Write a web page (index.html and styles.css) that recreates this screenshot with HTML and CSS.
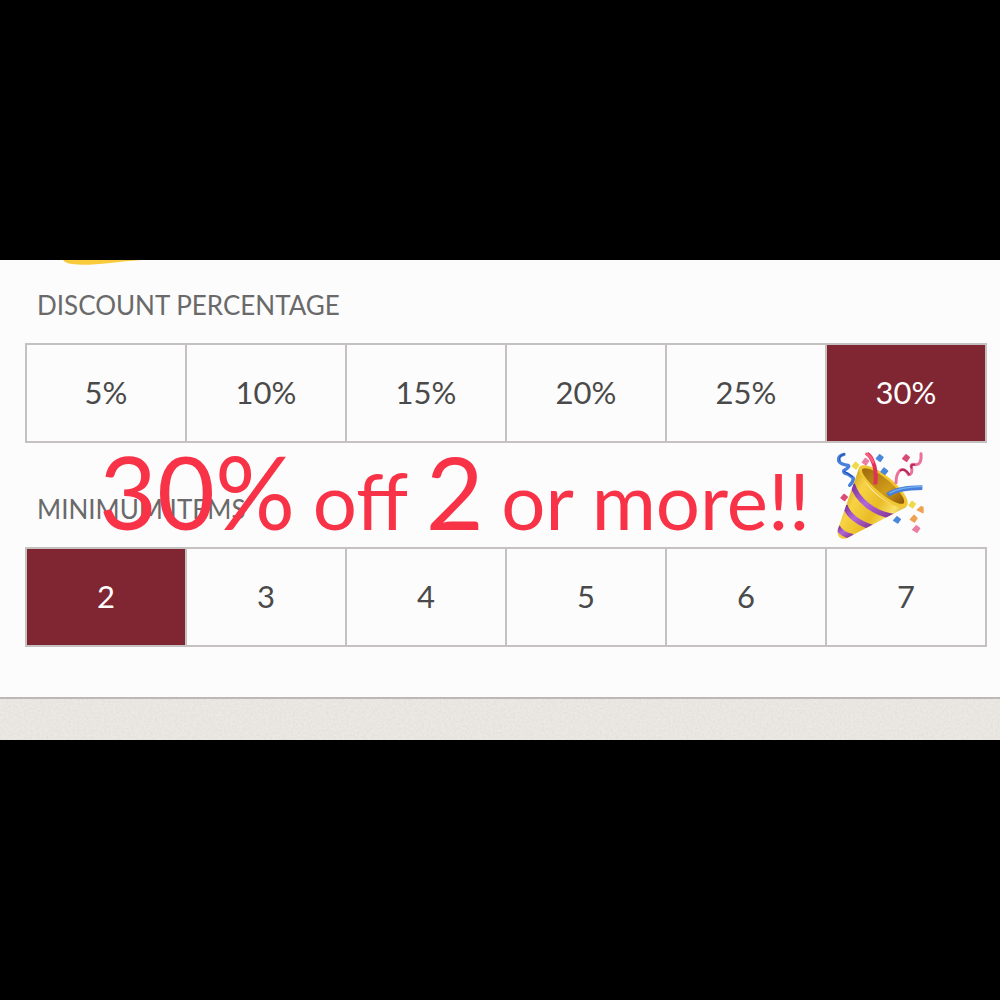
FILE: index.html
```html
<!DOCTYPE html>
<html lang="en">
<head>
<meta charset="utf-8">
<meta name="viewport" content="width=device-width, initial-scale=1">
<title>Bundle discount</title>
<link rel="stylesheet" href="styles.css">
</head>
<body>
<main class="panel">
  <svg class="marker" viewBox="0 0 80 6" aria-hidden="true"><path d="M1 0H80Q64 1 48 3Q22 6 10 4Q3 3 1 0Z" fill="#f9cb3c"/></svg>
  <form class="options">
    <fieldset class="group">
      <legend class="label">DISCOUNT PERCENTAGE</legend>
      <div class="choices">
        <label class="choice"><input type="radio" name="discount">5%</label>
        <label class="choice"><input type="radio" name="discount">10%</label>
        <label class="choice"><input type="radio" name="discount">15%</label>
        <label class="choice"><input type="radio" name="discount">20%</label>
        <label class="choice"><input type="radio" name="discount">25%</label>
        <label class="choice"><input type="radio" name="discount" checked>30%</label>
      </div>
    </fieldset>
    <fieldset class="group">
      <legend class="label">MINIMUM ITEMS</legend>
      <div class="choices">
        <label class="choice"><input type="radio" name="items" checked>2</label>
        <label class="choice"><input type="radio" name="items">3</label>
        <label class="choice"><input type="radio" name="items">4</label>
        <label class="choice"><input type="radio" name="items">5</label>
        <label class="choice"><input type="radio" name="items">6</label>
        <label class="choice"><input type="radio" name="items">7</label>
      </div>
    </fieldset>
  </form>
  <div class="caption">
    <p class="caption-text"><span class="figure">30%</span> <span>off</span> <span class="figure">2</span> <span>or</span> <span>more!!</span></p>
    <svg class="popper" viewBox="50 28 262 270" role="img" aria-label="Party popper">
      <defs>
        <linearGradient id="cone" x1="0" y1="0.2" x2="1" y2="0.8"><stop offset="0" stop-color="#bd830b"/><stop offset=".3" stop-color="#f7d344"/><stop offset=".58" stop-color="#e9bb25"/><stop offset=".78" stop-color="#fae269"/><stop offset="1" stop-color="#b77708"/></linearGradient>
        <linearGradient id="mouth" x1="0" y1="0" x2="1" y2="1"><stop offset="0" stop-color="#9c6b0b"/><stop offset=".6" stop-color="#d29c1a"/><stop offset="1" stop-color="#8b5709"/></linearGradient>
        <linearGradient id="stripe" x1="0" y1="0" x2="1" y2="1"><stop offset="0" stop-color="#7b329f"/><stop offset=".45" stop-color="#b267d9"/><stop offset="1" stop-color="#843493"/></linearGradient>
        <clipPath id="coneClip"><path d="M119 76C125 129 201 200 260 196L78 291Q50 293 54 265Z"/></clipPath>
      </defs>
      <path d="M119 76C125 129 201 200 260 196L78 291Q50 293 54 265Z" fill="url(#cone)"/>
      <g clip-path="url(#coneClip)" fill="none" stroke="url(#stripe)" stroke-width="16">
        <path d="M98 128C112 174 160 216 224 225"/>
        <path d="M76 191C84 221 117 246 158 257"/>
        <path d="M53 255C60 271 78 281 100 285"/>
      </g>
      <path d="M119 76C132 62 172 78 210 110C248 142 274 178 261 194C246 209 196 184 157 143C128 113 114 88 119 76Z" fill="#f2c832"/>
      <path d="M128 82C139 74 172 88 205 116C239 145 258 174 253 184C244 194 203 174 165 138C137 111 123 91 128 82Z" fill="url(#mouth)"/>
      <g fill="none" stroke-linecap="round" stroke-linejoin="round">
        <path d="M167 128Q171 85 160 61Q153 42 142 36" stroke="#df3159" stroke-width="12" stroke-linecap="butt"/>
        <path d="M140 37Q153 43 160 61" stroke="#ff5c7e" stroke-width="8"/>
        <path d="M204 160Q234 138 308 138" stroke="#477fd9" stroke-width="14" stroke-linecap="butt"/>
        <path d="M210 154Q242 136 307 134" stroke="#76b0f5" stroke-width="4"/>
        <path d="M73 38Q53 43 57 58Q63 69 86 71Q91 76 72 87Q69 94 84 97L101 109Q101 121 90 131" stroke="#4680dc" stroke-width="10"/>
        <path d="M74 37Q56 43 61 57M74 89L98 104" stroke="#2656b8" stroke-width="4"/>
        <path d="M229 123Q229 97 242 85Q255 79 267 99Q279 99 276 78Q270 65 288 69Q307 69 304 36" stroke="#ec729b" stroke-width="9"/>
        <path d="M243 86Q255 79 268 98M275 78Q273 68 284 69" stroke="#b62b57" stroke-width="6"/>
      </g>
      <g stroke-width="4" stroke-linejoin="round">
        <g fill="#f0d947" stroke="#f0d947"><path d="M107 62l10 8-8 12-11-8z"/><path d="M277 179l10 8-8 12-11-8z"/></g>
        <g fill="#ea7fa6" stroke="#ea7fa6"><path d="M137 50l10 8-8 12-11-8z"/><path d="M290 252l10 8-8 12-13-8z"/></g>
        <g fill="#4888db" stroke="#4888db"><path d="M180 39l10 8-8 12-12-8z"/><path d="M193 79l11 9-8 10-12-8z"/><path d="M232 225l10 8-8 11-12-8z"/></g>
        <g fill="#d94b75" stroke="#d94b75"><path d="M259 39l10 8-8 12-12-8z"/><path d="M73 158l10 8-8 11-11-8z"/></g>
        <g fill="#efa052" stroke="#efa052"><path d="M304 195l6 2v16l-17-8z"/><path d="M283 221l9 9-8 11-12-8z"/></g>
      </g>
    </svg>
  </div>
  <svg class="texture" aria-hidden="true">
    <filter id="grain" x="0" y="0" width="100%" height="100%"><feTurbulence type="fractalNoise" baseFrequency=".45" numOctaves="3" seed="4"/><feColorMatrix values="0 0 0 0 .6  0 0 0 0 .57  0 0 0 0 .53  .5 0 0 0 -.16"/></filter>
    <rect width="100%" height="100%" fill="#ece9e5"/>
    <rect width="100%" height="100%" filter="url(#grain)"/>
  </svg>
</main>
</body>
</html>
```

FILE: styles.css
```css
* { box-sizing: border-box; }

body {
  min-height: 100vh;
  margin: 0;
  display: flex;
  align-items: center;
  background: #000;
  color: #4a4a4a;
  font-family: Lato, "Open Sans", sans-serif;
}

.panel {
  position: relative;
  width: 100%;
  background: #fcfcfc;
}

.marker {
  position: absolute;
  top: 0;
  left: 62px;
  width: 80px;
  height: 6px;
}

.options {
  display: flex;
  flex-direction: column;
  gap: 45px;
  padding: 24px 13px 50px 25px;
}

.group {
  min-width: 0;
  margin: 0;
  padding: 0;
  border: 0;
}

.label {
  margin-bottom: 17px;
  padding: 0 12px;
  color: #6a6a6a;
  font-size: 26px;
  line-height: 42px;
}

.choices {
  display: grid;
  grid-template-columns: repeat(6, 1fr);
  gap: 2px;
  padding: 2px;
  background: #c4c1c0;
}

.choice {
  position: relative;
  height: 96px;
  display: flex;
  align-items: center;
  justify-content: center;
  padding-bottom: 2px;
  background: #fcfcfc;
  font-size: 31px;
  cursor: pointer;
}

.choice input {
  position: absolute;
  inset: 0;
  width: 100%;
  height: 100%;
  margin: 0;
  opacity: 0;
  cursor: pointer;
}

.choice:has(input:checked) {
  background: #802532;
  color: #fff;
}

.choice:focus-within { outline: 2px solid #802532; }

.caption {
  position: absolute;
  top: 189px;
  left: 99px;
  right: 76px;
  display: flex;
  align-items: center;
  gap: 26px;
  pointer-events: none;
}

.caption-text {
  flex: 1;
  display: flex;
  align-items: baseline;
  justify-content: space-between;
  margin: 0;
  color: #f83347;
  font-size: 78px;
  line-height: 84px;
  white-space: nowrap;
}

.figure { font-size: 100px; }

.popper {
  width: 88px;
  height: 90px;
}

.texture {
  display: block;
  width: 100%;
  height: 43px;
  border-top: 2px solid #bbb8b6;
}
```
